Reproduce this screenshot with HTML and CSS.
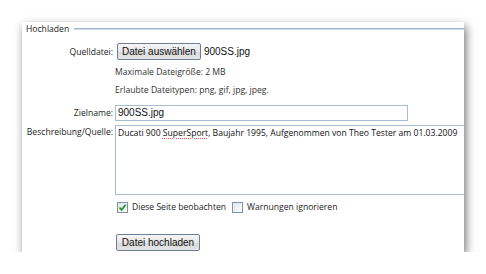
FILE: index.html
```html
<!DOCTYPE html>
<html>
<head>
  <title>Hochladen</title>
  <meta charset="utf-8" />
  <link rel="stylesheet" href="styles.css">
</head>
<body>
<div class="shot">
  <div class="legend"><span>Hochladen</span><i class="rule"></i></div>

  <div class="row row-file">
    <label class="lbl">Quelldatei:</label>
    <div class="field">
      <button class="btn">Datei auswählen</button>
      <span class="fname">900SS.jpg</span>
    </div>
  </div>

  <div class="row row-hint1">
    <span class="lbl"></span>
    <div class="field hint">Maximale Dateigröße: 2 MB</div>
  </div>

  <div class="row row-hint2">
    <span class="lbl"></span>
    <div class="field hint">Erlaubte Dateitypen: png, gif, jpg, jpeg.</div>
  </div>

  <div class="row row-name">
    <label class="lbl">Zielname:</label>
    <div class="field"><div class="input">900SS.jpg</div></div>
  </div>

  <div class="row row-desc">
    <label class="lbl">Beschreibung/Quelle:</label>
    <div class="field">
      <div class="textarea">Ducati 900 <span class="spell">SuperSport</span>, Baujahr 1995, Aufgenommen von Theo Tester am 01.03.2009</div>
    </div>
  </div>

  <div class="row row-checks">
    <span class="lbl"></span>
    <div class="field checks">
      <span class="cb checked"><svg width="9" height="9" viewBox="0 0 9 9"><path d="M1.5 4.5 L3.6 6.8 L7.6 1.8" fill="none" stroke="#1f9a1f" stroke-width="1.8"/></svg></span>
      <span class="cbtext">Diese Seite beobachten</span>
      <span class="cb"></span>
      <span class="cbtext">Warnungen ignorieren</span>
    </div>
  </div>

  <div class="row row-submit">
    <span class="lbl"></span>
    <div class="field"><button class="btn btn-submit">Datei hochladen</button></div>
  </div>
</div>
</body>
</html>
```

FILE: styles.css
```css
body {
  margin:0;
  padding:0;
  background:#fff;
  font-family:'Open Sans', 'DejaVu Sans', sans-serif;
  color:#222;
}

.shot {
  margin:22px 0 0 22px;
  width:442px;
  height:230px;
  padding-top:1px;
  box-sizing:border-box;
  background:#fff;
  overflow:hidden;
  box-shadow:2px 4px 9px rgba(0,0,0,0.55);
}

.legend {
  display:flex;
  align-items:center;
  height:12px;
  padding-left:4px;
  font-size:8.6px;
  color:#222;
}

.legend span {
  margin-right:5px;
}

.rule {
  flex:1;
  height:0;
  border-top:1px solid #9fb8d3;
  border-bottom:1px solid #cddbea;
}

.row {
  display:flex;
  align-items:center;
}

.lbl {
  width:91px;
  flex:none;
  margin-right:2px;
  text-align:right;
  font-size:8.6px;
  color:#222;
}

.field {
  flex:1;
  display:flex;
  align-items:center;
  min-width:0;
}

.row-file { margin-top:8px; height:17px; }
.row-hint1 { margin-top:6px; height:12px; }
.row-hint2 { margin-top:6px; height:12px; }
.row-name { margin-top:9px; height:16px; }
.row-desc { margin-top:4px; height:70px; align-items:flex-start; }
.row-checks { margin-top:6px; height:12px; }
.row-submit { margin-top:21px; height:17px; }

.row-desc .lbl {
  padding-top:1px;
}

.hint {
  font-size:8.6px;
  color:#333;
}

.btn {
  height:17px;
  margin:0 0 0 2px;
  padding:0 4px;
  font-family:'Liberation Sans', Arial, sans-serif;
  font-size:10px;
  color:#111;
  border:1px solid #6d7f94;
  border-radius:2px;
  background:linear-gradient(#f6f6f6, #e6e6e6 50%, #d9d9d9 51%, #e4e4e4);
}

.btn-submit {
  margin-left:1px;
  width:84px;
  padding:0;
}

.fname {
  margin-left:3px;
  font-family:'Liberation Sans', Arial, sans-serif;
  font-size:10px;
  color:#111;
}

.input {
  width:293px;
  height:16px;
  box-sizing:border-box;
  border:1px solid #a9bdd2;
  padding:0 2px;
  font-family:'Liberation Sans', Arial, sans-serif;
  font-size:10px;
  line-height:14px;
  color:#111;
}

.textarea {
  width:360px;
  height:70px;
  flex:none;
  box-sizing:border-box;
  border:1px solid #a9bdd2;
  padding:1px 2px;
  font-size:8.6px;
  line-height:12px;
  white-space:nowrap;
  color:#111;
}

.spell {
  text-decoration:underline dotted #e05a5a;
  text-underline-offset:2px;
}

.checks {
  padding-left:2px;
  font-size:8.6px;
  color:#222;
}

.cb {
  width:11px;
  height:11px;
  box-sizing:border-box;
  border:1px solid #7e93ab;
  background:linear-gradient(135deg, #dfe4ea, #fdfdfd);
  display:flex;
  align-items:center;
  justify-content:center;
}

.cbtext {
  margin:0 6px 0 4px;
}
```
